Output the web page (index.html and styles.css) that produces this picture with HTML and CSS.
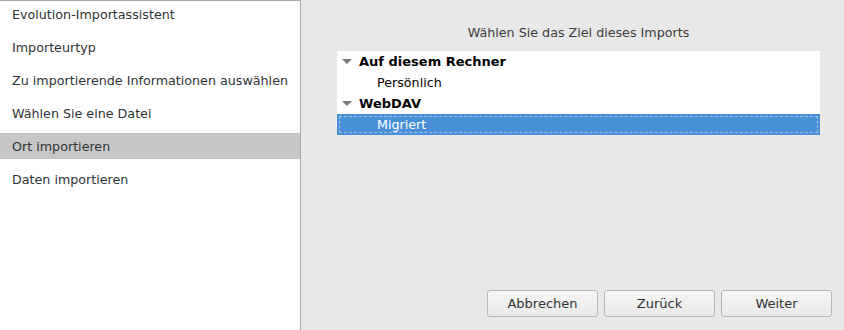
FILE: index.html
```html
<!DOCTYPE html>
<html lang="de">
<head>
  <meta charset="UTF-8" />
  <title>Evolution-Importassistent</title>
  <link rel="stylesheet" href="styles.css">
</head>
<body>
  <div class="window">
    <!-- SEITENLEISTE -->
    <div class="sidebar">
      <div class="step">Evolution-Importassistent</div>
      <div class="step">Importeurtyp</div>
      <div class="step">Zu importierende Informationen auswählen</div>
      <div class="step">Wählen Sie eine Datei</div>
      <div class="step current">Ort importieren</div>
      <div class="step">Daten importieren</div>
    </div>

    <!-- INHALT -->
    <div class="page">
      <div class="content">
        <div class="title">Wählen Sie das Ziel dieses Imports</div>
        <div class="tree">
          <div class="row group"><span class="expander"></span>Auf diesem Rechner</div>
          <div class="row child">Persönlich</div>
          <div class="row group"><span class="expander"></span>WebDAV</div>
          <div class="row child selected"><span class="focus"></span>Migriert</div>
        </div>
      </div>

      <div class="actions">
        <button class="btn">Abbrechen</button>
        <button class="btn">Zurück</button>
        <button class="btn">Weiter</button>
      </div>
    </div>
  </div>
</body>
</html>
```

FILE: styles.css
```css
html, body {
  margin: 0;
  height: 100%;
}

body {
  font-family: "DejaVu Sans", sans-serif;
  font-size: 12.7px;
  color: #2e3436;
  background: #e8e8e8;
}

.window {
  display: flex;
  height: 330px;
}

.sidebar {
  width: 300px;
  background: white;
  border-top: 1px solid #a8a8a8;
  border-right: 1px solid #a8a8a8;
  display: flex;
  flex-direction: column;
  gap: 7px;
}

.step {
  height: 26px;
  line-height: 27px;
  padding-left: 12px;
  white-space: nowrap;
}

.step.current {
  background: #c6c7c6;
}

.page {
  flex: 1;
  display: flex;
  flex-direction: column;
}

.content {
  flex: 1;
  padding: 24px 24px 0 36px;
}

.title {
  text-align: center;
  line-height: 17px;
  margin-bottom: 10px;
  color: #3c3c3c;
}

.tree {
  background: white;
  color: black;
}

.row {
  position: relative;
  height: 21px;
  line-height: 21px;
  white-space: nowrap;
}

.row.group {
  font-weight: bold;
  font-size: 13px;
  padding-left: 22px;
}

.row.child {
  padding-left: 40px;
}

.row.selected {
  background: #4a90d9;
  color: white;
}

.expander {
  position: absolute;
  left: 5px;
  top: 8px;
  width: 0;
  height: 0;
  border-left: 5px solid transparent;
  border-right: 5px solid transparent;
  border-top: 5px solid #7a7a7a;
}

.focus {
  position: absolute;
  left: 2px;
  right: 2px;
  top: 2px;
  bottom: 2px;
  border: 1px dashed rgba(255,255,255,0.45);
}

.actions {
  display: flex;
  justify-content: flex-end;
  gap: 6px;
  padding: 0 12px 13px 0;
}

.btn {
  width: 111px;
  height: 27px;
  font-family: "DejaVu Sans", sans-serif;
  font-size: 13px;
  color: #2e3436;
  background: linear-gradient(#f6f6f5, #e9e9e8);
  border: 1px solid #b6b6b3;
  border-radius: 3px;
  padding: 0;
}
```
